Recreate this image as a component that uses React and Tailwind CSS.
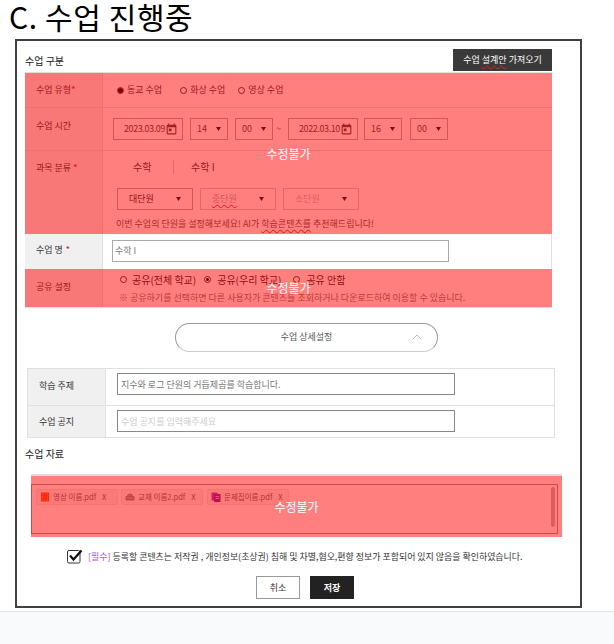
import { ChevronUp } from 'lucide-react';
import { MdToday } from 'react-icons/md';

const squiggle = 'underline decoration-wavy decoration-[#e02020] decoration-1 underline-offset-2';

function Locked({ className = '', children }) {
  return (
    <div className={`relative ${className}`}>
      {children}
      {/* Red cover */}
      <div className="absolute inset-0 flex items-center justify-center bg-[#ff0000]/50 text-[12px] text-white">
        수정불가
      </div>
    </div>
  );
}

function Label({ children, className = '' }) {
  return (
    <div className={`w-[78px] shrink-0 border-r border-[#e0e0e0] bg-[#f0f0f0] pl-[11px] text-[9px] text-[#333] ${className}`}>
      {children}
    </div>
  );
}

function Radio({ on, ring, children, className = '' }) {
  return (
    <span className={`flex items-center gap-[3px] ${className}`}>
      <span className="flex h-[7px] w-[7px] items-center justify-center rounded-full border border-[#333]">
        {on && <span className={`rounded-full bg-black ${ring ? 'h-[3px] w-[3px]' : 'h-[5px] w-[5px]'}`} />}
      </span>
      {children}
    </span>
  );
}

function Arrow() {
  return (
    <svg width="5" height="4" viewBox="0 0 5 4" className="shrink-0">
      <path d="M0 0 H5 L2.5 4 Z" fill="#111" />
    </svg>
  );
}

function DateBox({ value, className = '' }) {
  return (
    <div className={`flex h-[22px] w-[70px] items-center justify-between border border-[#aaa] pl-[10px] pr-[4px] text-[9px] tracking-[-0.4px] text-[#444] ${className}`}>
      {value}
      <MdToday className="text-[13px] text-[#444]" />
    </div>
  );
}

function Select({ value, w = 'w-[38px]', className = 'px-[6px]', textClass = 'text-[#444]' }) {
  return (
    <div className={`flex h-[22px] ${w} items-center justify-between border border-[#aaa] text-[9px] ${textClass} ${className}`}>
      <span>{value}</span>
      <Arrow />
    </div>
  );
}

function FileChip({ icon, name, className = '' }) {
  return (
    <div className={`flex h-[16px] w-[82px] items-center gap-[3px] rounded-[2px] border border-[#e8e8e8] bg-[#f4f4f4] pl-[3px] text-[7.5px] text-[#666] ${className}`}>
      {icon}
      <span className="whitespace-nowrap">{name}</span>
      <span className="ml-[3px]">X</span>
    </div>
  );
}

const VideoIcon = (
  <svg width="10" height="10" viewBox="0 0 10 10" className="shrink-0">
    <rect x="1" y="0.5" width="8" height="9" fill="#f25a12" />
    <path d="M2 2 H3 M2 5 H3 M2 8 H3 M7 2 H8 M7 5 H8 M7 8 H8" stroke="#ffb080" />
  </svg>
);

const BookIcon = (
  <svg width="10" height="10" viewBox="0 0 10 10" className="shrink-0">
    <path d="M2 4 Q2 1.5 5 1.5 Q8 1.5 8 4 Z" fill="#999" />
    <rect x="0.5" y="4" width="9" height="4.5" rx="1" fill="#888" />
    <path d="M2 6 H8" stroke="#ccc" />
  </svg>
);

const DocsIcon = (
  <svg width="10" height="10" viewBox="0 0 10 10" className="shrink-0">
    <rect x="0.5" y="0.5" width="6" height="8" rx="0.5" fill="#9b3fc0" />
    <rect x="3" y="2" width="6.5" height="8" rx="0.5" fill="#7a1fa2" />
    <path d="M4.5 4.5 H8 M4.5 6.5 H8" stroke="#d9a8ec" />
  </svg>
);

export default function App() {
  return (
    <div
      className="flex h-[644px] w-[614px] flex-col overflow-hidden bg-white"
      style={{ fontFamily: '"Noto Sans CJK KR", "Noto Sans", sans-serif' }}
    >
      <h1 className="h-[39px] pl-[9px] text-[30px] leading-[33px] font-normal tracking-[0.6px] text-black">C. 수업 진행중</h1>

      <div className="ml-[15px] h-[569px] w-[567px] border-2 border-[#404040] pl-[8px]">
        {/* Title row */}
        <div className="flex h-[31px] w-[527px] items-end justify-between">
          <span className="mb-[5px] text-[10px] leading-[12px] text-[#222]">수업 구분</span>
          <button className="mb-[1px] h-[22px] w-[99px] bg-[#3a3a3a] text-[9px] text-white">
            수업 <span className={squiggle}>설계안</span> 가져오기
          </button>
        </div>

        {/* Locked rows */}
        <Locked className="w-[527px] border-t border-[#e0e0e0]">
          <div className="flex h-[35px] border-b border-[#e0e0e0]">
            <Label className="pt-[10px]">
              수업 유형<span className="text-[#ee0000]">*</span>
            </Label>
            <div className="flex items-center pl-[14px] text-[9px] text-[#333]">
              <Radio on>동교 수업</Radio>
              <Radio className="ml-[18px]">화상 수업</Radio>
              <Radio className="ml-[13px]">영상 수업</Radio>
            </div>
          </div>
          <div className="flex h-[43px] border-b border-[#e0e0e0]">
            <Label className="pt-[11px]">수업 시간</Label>
            <div className="flex items-start pt-[10px] pl-[10px]">
              <DateBox value="2023.03.09" />
              <Select value="14" className="ml-[7px] px-[6px]" />
              <Select value="00" className="ml-[7px] px-[6px]" />
              <span className="ml-[3px] pt-[4px] text-[9px] text-[#444]">~</span>
              <DateBox value="2022.03.10" className="ml-[7px]" />
              <Select value="16" className="ml-[6px] px-[6px]" />
              <Select value="00" className="ml-[8px] px-[6px]" />
            </div>
          </div>
          <div className="flex h-[83px]">
            <Label className="pt-[10px]">
              과목 분류 <span className="text-[#ee0000]">*</span>
            </Label>
            <div className="pl-[14px]">
              <div className="flex h-[37px] items-center pb-[6px] text-[10px] text-[#333]">
                <span className="ml-[16px] w-[40px]">수학</span>
                <span className="h-[14px] w-px bg-[#ccc]" />
                <span className="ml-[17px]">수학 I</span>
              </div>
              <div className="flex gap-[7px]">
                <Select value="대단원" w="w-[76px]" className="px-[11px]" textClass="text-[#222]" />
                <Select
                  value={<span className={squiggle}>중단원</span>}
                  w="w-[76px]"
                  className="border-[#ccc] px-[11px]"
                  textClass="text-[#aaa]"
                />
                <Select value="소단원" w="w-[76px]" className="border-[#ccc] px-[11px]" textClass="text-[#bbb]" />
              </div>
              <p className="mt-[8px] -ml-px whitespace-nowrap text-[9px] leading-[12px] text-[#555]">
                이번 수업의 단원을 설정해보세요! AI가 <span className={squiggle}>학습콘텐츠를</span> 추천해드립니다!
              </p>
            </div>
          </div>
        </Locked>

        {/* Lesson name */}
        <div className="flex h-[35px] w-[527px] border-r border-[#e0e0e0]">
          <Label className="flex items-center pb-[4px]">
            수업 명 <span className="ml-[3px] text-[#ee0000]">*</span>
          </Label>
          <div className="flex items-center pb-[2px] pl-[9px]">
            <input
              readOnly
              value="수학 I"
              className="h-[22px] w-[337px] border border-[#aaa] px-[2px] text-[9px] text-[#777] outline-none"
            />
          </div>
        </div>

        {/* Sharing */}
        <Locked className="w-[527px] border-b border-[#e0e0e0]">
          <div className="flex h-[38px]">
            <Label className="flex items-center pb-[2px]">공유 설정</Label>
            <div className="pl-[17px]">
              <div className="flex h-[20px] items-center text-[10px] text-[#222]">
                <Radio className="gap-[5px]">공유(전체 학교)</Radio>
                <Radio on ring className="ml-[8px] gap-[6px]">공유(우리 학교)</Radio>
                <Radio className="ml-[12px] gap-[6px]">공유 안함</Radio>
              </div>
              <p className="mt-[3px] -ml-px whitespace-nowrap text-[9px] leading-[12px] text-[#777]">
                ※ 공유하기를 선택하면 다른 사용자가 콘텐츠를 조회하거나 다운로드하여 이용할 수 있습니다.
              </p>
            </div>
          </div>
        </Locked>

        {/* Detail toggle */}
        <button className="relative mt-[15px] ml-[150px] flex h-[29px] w-[263px] items-center justify-center rounded-full border border-[#999] border-b-[#ccc] pb-[1px] text-[9px] text-[#555]">
          수업 상세설정
          <ChevronUp className="absolute right-[12px] text-[#aaa]" size={16} strokeWidth={1.2} />
        </button>

        {/* Topic + notice */}
        <div className="mt-[16px] ml-[2px] w-[528px] border border-[#e0e0e0]">
          <div className="flex h-[37px] border-b border-[#e0e0e0]">
            <Label className="flex items-center pb-[3px] pl-[10px] text-[#222]">학습 주제</Label>
            <div className="pt-[4px] pl-[11px]">
              <input
                readOnly
                value="지수와 로그 단원의 거듭제곱를 학습합니다."
                className="block h-[22px] w-[338px] border border-[#888] px-[3px] text-[9px] text-[#777] outline-none"
              />
            </div>
          </div>
          <div className="flex h-[31px]">
            <Label className="flex items-center pl-[10px] text-[#222]">수업 공지</Label>
            <div className="pt-[4px] pl-[11px]">
              <input
                readOnly
                placeholder="수업 공지를 입력해주세요"
                className="block h-[22px] w-[338px] border border-[#888] px-[3px] text-[9px] outline-none placeholder:text-[#ccc]"
              />
            </div>
          </div>
        </div>

        <div className="mt-[9px] text-[10px] leading-[14px] text-[#222]">수업 자료</div>

        {/* Files */}
        <Locked className="mt-[13px] ml-[6px] h-[63px] w-[531px] border-t-2 border-[#dcdcdc]">
          <div className="relative mt-[8px] flex h-[50px] w-[527px] gap-[3px] border border-[#999] pt-[4px] pl-[4px]">
            <FileChip icon={VideoIcon} name="영상 이름.pdf" />
            <FileChip icon={BookIcon} name="교재 이름2.pdf" />
            <FileChip icon={DocsIcon} name="문제집이름.pdf" className="ml-px" />
            <div className="absolute top-[2px] right-[2px] h-[40px] w-[4px] rounded-full bg-[#bbb]" />
          </div>
        </Locked>

        {/* Agreement */}
        <div className="mt-[12px] ml-[42px] flex items-center gap-[5px] text-[8.95px] whitespace-nowrap text-[#333]">
          <svg width="16" height="15" viewBox="0 0 16 15" className="shrink-0">
            <rect x="0.5" y="1.5" width="12.5" height="12.5" rx="1.5" fill="#fff" stroke="#333" />
            <path d="M3 6.5 L6.5 10.5 L14.5 1.5" fill="none" stroke="#111" strokeWidth="2.2" />
          </svg>
          <span>
            <span className="text-[#a855f7]">[필수]</span> 등록할 콘텐츠는 저작권 , 개인정보(초상권) 침해 및 차별,혐오,편향 정보가 포함되어 있지 않음을 확인하였습니다.
          </span>
        </div>

        {/* Actions */}
        <div className="mt-[12px] ml-[231px] flex gap-[10px]">
          <button className="h-[23px] w-[44px] border border-[#999] bg-white text-[9px] text-[#333]">취소</button>
          <button className="h-[23px] w-[44px] bg-[#222] text-[9px] font-bold text-white">저장</button>
        </div>
      </div>

      {/* Footer strip */}
      <div className="mt-[3px] flex-1 border-t border-[#e5e5e5] bg-[#f9fafb]" />
    </div>
  );
}
